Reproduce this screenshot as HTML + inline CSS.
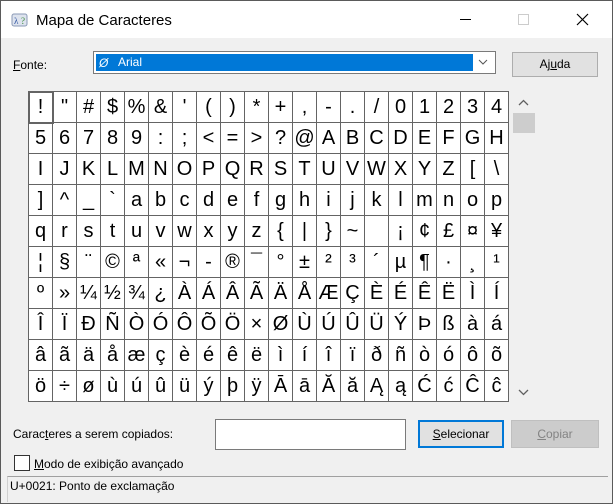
<!DOCTYPE html>
<html><head><meta charset="utf-8"><style>
*{box-sizing:border-box;margin:0;padding:0}
body{width:613px;height:504px;overflow:hidden;background:#f0f0f0;font-family:"Liberation Sans",Arial,sans-serif;position:relative}
.win{position:absolute;left:0;top:0;width:613px;height:504px;border:1px solid #5a5a5a;background:#f0f0f0}
.title{position:absolute;left:0;top:0;width:611px;height:37px;background:#fff}
.t{position:absolute;left:35px;top:11px;font-size:15px;color:#000}
.a{position:absolute;font-size:12px;color:#000}
.grid{position:absolute;left:27px;top:90px;width:481px;height:311px;padding:1px;background:#646464;display:grid;grid-template-columns:repeat(20,23px);grid-template-rows:repeat(10,30px);gap:1px}
.grid div{background:#fff;font-size:20px;text-align:center;line-height:30px;color:#000;white-space:nowrap;overflow:hidden}
.sel{position:absolute;left:27px;top:90px;width:26px;height:33px;border:2px solid #646464;}
.btn{position:absolute;border:1px solid #adadad;background:#e1e1e1;font-size:12px;text-align:center}
</style></head><body><div class="win">
<div class="title">
<svg style="position:absolute;left:10px;top:11px" width="18" height="16"><rect x="1" y="2" width="15" height="12" rx="2" fill="#dde3ee" stroke="#8a9ab5"/><text x="3" y="12" font-size="9" fill="#2a4f9e" font-family="Liberation Serif">λ</text><text x="10" y="12" font-size="9" fill="#3a8a3a" font-family="Liberation Serif">?</text></svg>
<div class="t">Mapa de Caracteres</div>
<div style="position:absolute;left:459px;top:18px;width:11px;height:1px;background:#000"></div>
<div style="position:absolute;left:517px;top:13px;width:11px;height:11px;border:1px solid #ccc"></div>
<svg style="position:absolute;left:575px;top:12px" width="13" height="13"><path d="M1 1L12 12M12 1L1 12" stroke="#000" stroke-width="1.2"/></svg>
</div>
<div class="a" style="left:12px;top:57px"><u>F</u>onte:</div>
<div style="position:absolute;left:92px;top:50px;width:403px;height:23px;border:1px solid #7a7a7a;background:#fff">
<div style="position:absolute;left:2px;top:2px;width:377px;height:17px;background:#0078d7;color:#fff;font-size:12px;line-height:17px;padding-left:22px">Arial</div>
<div style="position:absolute;left:5px;top:4px;font-size:12px;color:#fff;font-style:italic">Ø</div>
<svg style="position:absolute;left:384px;top:7px" width="10" height="7"><path d="M1 1L5 5L9 1" fill="none" stroke="#555"/></svg>
</div>
<div class="btn" style="left:511px;top:51px;width:86px;height:25px;line-height:23px">Aj<u>u</u>da</div>
<div class="grid">
<div>!</div><div>"</div><div>#</div><div>$</div><div>%</div><div>&amp;</div><div>'</div><div>(</div><div>)</div><div>*</div><div>+</div><div>,</div><div>-</div><div>.</div><div>/</div><div>0</div><div>1</div><div>2</div><div>3</div><div>4</div>
<div>5</div><div>6</div><div>7</div><div>8</div><div>9</div><div>:</div><div>;</div><div>&lt;</div><div>=</div><div>&gt;</div><div>?</div><div>@</div><div>A</div><div>B</div><div>C</div><div>D</div><div>E</div><div>F</div><div>G</div><div>H</div>
<div>I</div><div>J</div><div>K</div><div>L</div><div>M</div><div>N</div><div>O</div><div>P</div><div>Q</div><div>R</div><div>S</div><div>T</div><div>U</div><div>V</div><div>W</div><div>X</div><div>Y</div><div>Z</div><div>[</div><div>\</div>
<div>]</div><div>^</div><div>_</div><div>`</div><div>a</div><div>b</div><div>c</div><div>d</div><div>e</div><div>f</div><div>g</div><div>h</div><div>i</div><div>j</div><div>k</div><div>l</div><div>m</div><div>n</div><div>o</div><div>p</div>
<div>q</div><div>r</div><div>s</div><div>t</div><div>u</div><div>v</div><div>w</div><div>x</div><div>y</div><div>z</div><div>{</div><div>|</div><div>}</div><div>~</div><div></div><div>¡</div><div>¢</div><div>£</div><div>¤</div><div>¥</div>
<div>¦</div><div>§</div><div>¨</div><div>©</div><div>ª</div><div>«</div><div>¬</div><div>-</div><div>®</div><div>¯</div><div>°</div><div>±</div><div>²</div><div>³</div><div>´</div><div>µ</div><div>¶</div><div>·</div><div>¸</div><div>¹</div>
<div>º</div><div>»</div><div>¼</div><div>½</div><div>¾</div><div>¿</div><div>À</div><div>Á</div><div>Â</div><div>Ã</div><div>Ä</div><div>Å</div><div>Æ</div><div>Ç</div><div>È</div><div>É</div><div>Ê</div><div>Ë</div><div>Ì</div><div>Í</div>
<div>Î</div><div>Ï</div><div>Ð</div><div>Ñ</div><div>Ò</div><div>Ó</div><div>Ô</div><div>Õ</div><div>Ö</div><div>×</div><div>Ø</div><div>Ù</div><div>Ú</div><div>Û</div><div>Ü</div><div>Ý</div><div>Þ</div><div>ß</div><div>à</div><div>á</div>
<div>â</div><div>ã</div><div>ä</div><div>å</div><div>æ</div><div>ç</div><div>è</div><div>é</div><div>ê</div><div>ë</div><div>ì</div><div>í</div><div>î</div><div>ï</div><div>ð</div><div>ñ</div><div>ò</div><div>ó</div><div>ô</div><div>õ</div>
<div>ö</div><div>÷</div><div>ø</div><div>ù</div><div>ú</div><div>û</div><div>ü</div><div>ý</div><div>þ</div><div>ÿ</div><div>Ā</div><div>ā</div><div>Ă</div><div>ă</div><div>Ą</div><div>ą</div><div>Ć</div><div>ć</div><div>Ĉ</div><div>ĉ</div>
</div>
<div class="sel"></div>
<svg style="position:absolute;left:517px;top:98px" width="11" height="7"><path d="M1 6L5.5 1.5L10 6" fill="none" stroke="#606060" stroke-width="1.3"/></svg>
<div style="position:absolute;left:512px;top:112px;width:22px;height:20px;background:#cdcdcd"></div>
<svg style="position:absolute;left:517px;top:388px" width="11" height="7"><path d="M1 1L5.5 5.5L10 1" fill="none" stroke="#606060" stroke-width="1.3"/></svg>
<div class="a" style="left:12px;top:426px">Carac<u>t</u>eres a serem copiados:</div>
<div style="position:absolute;left:214px;top:418px;width:191px;height:31px;border:1px solid #7a7a7a;background:#fff"></div>
<div class="btn" style="left:417px;top:419px;width:86px;height:28px;line-height:24px;border:2px solid #0078d7"><u>S</u>elecionar</div>
<div class="btn" style="left:510px;top:419px;width:88px;height:28px;line-height:26px;background:#cccccc;border-color:#bfbfbf;color:#838383"><u>C</u>opiar</div>
<div style="position:absolute;left:13px;top:454px;width:16px;height:16px;border:1px solid #333;background:#fff"></div>
<div class="a" style="left:33px;top:456px"><u>M</u>odo de exibição avançado</div>
<div style="position:absolute;left:6px;top:475px;width:601px;height:26px;border-top:1px solid #a0a0a0;border-left:1px solid #d0d0d0"></div>
<div class="a" style="left:9px;top:478px">U+0021: Ponto de exclamação</div>
</div></body></html>
